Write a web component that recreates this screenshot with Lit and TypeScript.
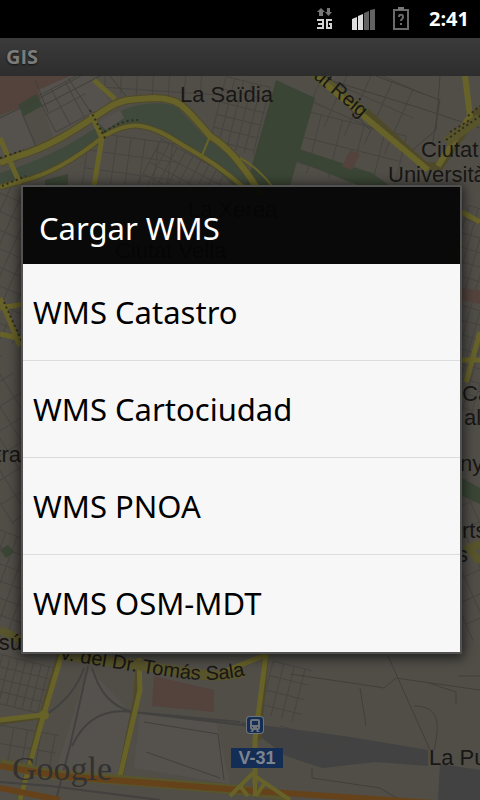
import { LitElement, html, css, svg } from "lit";
import { customElement, property } from "lit/decorators.js";

/** Parallel lines through a rotated box, used for the small street grids. */
function grid(cx: number, cy: number, w: number, h: number, step: number, angle: number) {
  let d = "";
  for (let x = -w / 2; x <= w / 2; x += step) d += `M${x} ${-h / 2}V${h / 2}`;
  for (let y = -h / 2; y <= h / 2; y += step + 4) d += `M${-w / 2} ${y}H${w / 2}`;
  return svg`<path class="street" d=${d} transform="translate(${cx} ${cy}) rotate(${angle})" />`;
}

@customElement("city-map")
class CityMap extends LitElement {
  static styles = css`
    :host { display: block; overflow: hidden; background: #514e48; }
    svg { display: block; width: 100%; height: 100%; }
    path { fill: none; }
    .street { stroke: #474440; stroke-width: 1; }
    .minor { stroke: #413f3b; stroke-width: 1; }
    .rail { stroke: #424140; stroke-width: 2; }
    .edge { stroke: #4e4928; }
    .road { stroke: #676228; }
    .halo { stroke: #58542c; }
    .dots { stroke: #2f2c18; stroke-dasharray: 2 3; stroke-width: 2; }
    .park { fill: #3a4535; }
    .water { fill: #3f4a3c; }
    .pink { fill: #54433d; }
    .block { fill: #55524d; }
    .depot { fill: #424243; }
    .orange { stroke: #66421a; }
    .w2 { stroke-width: 2; }
    .w4 { stroke-width: 4; }
    .w5 { stroke-width: 5; }
    .w6 { stroke-width: 6; }
    .w8 { stroke-width: 8; }
    .w10 { stroke-width: 10; }
    .hub { fill: #676228; }
    .label { font: 22px "Liberation Sans", Arial, sans-serif; fill: #181715; }
    .small { font-size: 20px; }
    .google { font: 34px "Liberation Serif", "Times New Roman", serif; fill: #32312f; }
    .sign { fill: #142d55; }
    .sign-text { font: bold 18px "Liberation Sans", Arial, sans-serif; fill: #7c8490; }
    .light { fill: #6e747c; }
  `;

  render() {
    const main =
      "M0 163L18 156C50 147 78 128 108 108C122 99 132 99 154 98C180 98 184 106 210 136C226 146 240 160 262 196";
    const south = "M0 187L22 181C52 174 82 154 104 136C128 122 142 122 168 136C196 154 216 162 244 188";
    return html`
      <svg viewBox="0 76 480 724" preserveAspectRatio="xMidYMid slice" role="img" aria-label="Valencia">
        <path class="pink" d="M0 76H70L32 103L0 115Z" />
        <path class="block" d="M0 118L20 110L34 145L0 158ZM38 90L70 76H92L110 102L55 145Z" />
        ${grid(66, 104, 44, 40, 16, -28)}
        ${grid(130, 168, 90, 60, 14, 8)}
        ${grid(185, 180, 80, 50, 9, 28)}
        ${grid(160, 84, 110, 26, 16, 4)}
        ${grid(240, 116, 46, 70, 9, 14)}
        ${grid(364, 106, 100, 70, 22, 24)}
        ${grid(346, 152, 110, 60, 22, 14)}
        ${grid(8, 260, 80, 150, 13, 24)}
        ${grid(8, 440, 80, 150, 17, -32)}
        ${grid(4, 590, 60, 110, 12, 20)}
        ${grid(470, 310, 60, 200, 10, 16)}
        ${grid(470, 560, 60, 150, 18, -24)}
        ${grid(20, 684, 64, 48, 8, 14)}
        ${grid(26, 750, 60, 40, 14, 10)}
        ${grid(286, 692, 40, 54, 11, 14)}

        <path class="water" d="M0 173C50 158 86 136 112 116C134 102 164 100 178 108L208 140C228 152 248 172 260 196H244C212 164 192 148 168 136C142 122 128 122 104 136C78 154 50 174 0 184Z" />
        <path class="block" d="M98 122L120 110L124 118L106 130Z" />
        <path class="park" d="M18 105L36 94L42 106L24 116ZM45 180L68 174V186H45ZM276 80L315 98L290 186H246Z" />
        <path class="park" d="M296 148L372 173L390 186H360L294 160Z" />
        <path class="pink" d="M350 150L360 154L352 170L342 166ZM462 288L480 290V304L462 300Z" />
        <path class="minor" d="M0 118L36 100L88 72M35 80L48 112M42 106L100 76M22 113L36 146M68 78L92 114M110 76L126 96M316 76L420 108L480 128M440 76L436 130L408 154M326 84L370 130M376 76L440 100L432 146" />

        <path class="edge w8" d=${main} />
        <path class="edge w6" d=${south} />
        <path class="road w6" d=${main} />
        <path class="road w4" d=${south} />
        <path class="road w5" d="M94 80L115 99M91 114L102 138L94 186M0 138L20 184" />
        <path class="road w2" d="M210 136L201 158" />
        <path class="dots" d="M0 158L24 150M2 186L26 176M90 110L106 140M104 132C120 122 128 120 138 120" />
        <path class="road w2" d="M240 158Q256 166 272 186" />
        <path class="halo w10" d="M308 68L368 116" />
        <path class="edge w8" d="M366 112L425 166H440L480 108" />
        <path class="road w6" d="M316 76L428 170M465 76L470 116L438 166" />
        <path class="halo w10" d="M480 118L446 142" />
        <path class="dots" d="M446 140L480 116M450 132L470 120M468 116L480 106" />

        <path class="road w5" d="M0 298L20 346M0 308L24 304M0 334L22 339" />
        <path class="dots" d="M4 302L22 342" />
        <path class="road w5" d="M462 212L480 222M480 332L466 382M462 360H480" />
        <path class="park" d="M0 550L8 545L14 552L6 558ZM462 478L480 488V504L462 496Z" />
        <path class="halo w8" d="M0 630L22 640M466 545L480 562M470 548L480 544" />

        <path class="block" d="M90 670L130 712L120 786L56 770L84 680ZM140 712L216 722L230 784L134 768Z" />
        <path class="pink" d="M154 676L214 690V712L152 706Z" />
        <path class="rail" d="M84 668C76 692 60 706 44 716M92 668C100 694 112 706 132 712L240 722M72 746C84 720 104 708 132 712M88 666L70 746L56 800M132 712L250 726" />
        <path class="minor" d="M144 722L218 734L224 780M146 752L220 778M290 674L358 684L384 688L396 678L480 690M388 656L414 714L430 750M360 688L366 726M414 706C440 706 440 724 434 750M312 768V778L380 788L400 800M458 676H480M426 682L456 692V704" />
        <path class="depot" d="M240 722L344 736L428 750V766L376 762L322 768L286 756Z" />
        <path class="depot" d="M440 764L480 770V800H438Z" />
        <path class="street" d="M280 726L350 744M286 736L336 750M300 744L328 752" />
        <path class="edge w6" d="M60 654L42 716L20 800M0 722L42 716M139 658L136 700L120 778M266 654L258 740" />
        <path class="road w5" d="M62 654L44 714L30 764L20 800M0 720L42 715M139 658L140 690L134 716L120 776M266 654L255 740V784M218 674L268 654" />
        <circle class="hub" cx="44" cy="715" r="5" />
        <path class="halo w10" d="M62 655C100 660 160 668 198 674Q222 678 244 672" />
        <path class="halo w10" d="M0 764L50 774L120 780L240 790L290 796" />
        <path class="orange w6" d="M0 766L60 776L240 790L480 806" />
        <path class="orange w6" d="M0 788L60 800" />
        <path class="road w4" d="M230 796L252 774L290 800M240 786L248 796M264 784L256 796M255 780V796" />
        <path class="rail" d="M0 782L50 786L160 800" />

        <defs>
          <path id="reig" d="M311 76L380 134" />
          <path id="tomas" d="M60 659Q150 675 188 679Q224 682 250 674" />
        </defs>
        <text class="label" x="180" y="102">La Saïdia</text>
        <text class="label small"><textPath href="#reig" startOffset="2">ut Reig</textPath></text>
        <text class="label" x="421" y="157">Ciutat</text>
        <text class="label" x="388" y="182">Universitària</text>
        <text class="label" x="188" y="217">La Xerea</text>
        <text class="label" x="115" y="258">Ciutat Vella</text>
        <text class="label" x="462" y="401">Ca</text>
        <text class="label" x="464" y="425">al</text>
        <text class="label" x="460" y="471">ny</text>
        <text class="label" x="462" y="538">rts</text>
        <text class="label" x="457" y="562">s</text>
        <text class="label" x="21" y="462" text-anchor="end">Extra</text>
        <text class="label" x="22" y="650" text-anchor="end">Jesú</text>
        <text class="label small"><textPath href="#tomas">v. del Dr. Tomás Sala</textPath></text>
        <text class="label" x="429" y="765">La Punta</text>

        <rect class="light" x="246" y="716" width="18" height="18" rx="4" />
        <rect class="sign" x="247" y="717" width="16" height="16" rx="3" />
        <path class="light" fill-rule="evenodd" d="M252 719H258Q260 719 260 721V728Q260 730 258 730L260 732H257L256 730H254L253 732H250L252 730Q250 730 250 728V721Q250 719 252 719ZM252 721V725H258V721ZM252 727V728H253V727ZM257 727V728H258V727Z" />
        <rect class="sign" x="231" y="748" width="52" height="20" />
        <text class="sign-text" x="257" y="764" text-anchor="middle">V-31</text>
        <text class="google" x="12" y="780">Google</text>
      </svg>
    `;
  }
}

@customElement("status-bar")
class StatusBar extends LitElement {
  static styles = css`
    :host {
      display: flex; align-items: center; justify-content: flex-end;
      height: 38px; padding-right: 11px; background: #000; color: #fff;
      font: bold 20px/38px "Open Sans", "Noto Sans", sans-serif;
    }
    svg { width: 96px; height: 38px; margin-right: 18px; }
    .g3 { fill: none; stroke: #d2d2d2; stroke-width: 2; }
    .dim { fill: #777; }
    .on { fill: #ddd; }
    .off { fill: #626262; }
    .cell { fill: none; stroke: #6a6a6a; stroke-width: 2; }
  `;

  render() {
    return html`
      <svg viewBox="315 0 96 38" aria-hidden="true">
        <path class="dim" d="M321 8L325 12H323V16H319V12H317ZM327 8H330V12H332L328.500 16L325 12H327Z" />
        <path class="g3" d="M317 20H323V28H317M318 24H323M332 20H327V28H331V24H329" />
        <path class="on" d="M352 19L357 17V30H352ZM358 16L363 14V30H358Z" />
        <path class="off" d="M364 13L369 11V30H364ZM370 10L375 9V30H370Z" />
        <path class="cell" d="M394 10H408V29H394Z" />
        <path class="dim" d="M398 7H404V10H398Z" />
        <path class="cell" d="M399 17C399 14 403 14 403 17C403 19 401 19 401 21M401 23V25" />
      </svg>
      <time>2:41</time>
    `;
  }
}

@customElement("choice-dialog")
class ChoiceDialog extends LitElement {
  @property() heading = "";
  @property({ attribute: false }) choices: string[] = [];

  static styles = css`
    :host {
      display: block; border: 2px solid #525252; border-radius: 2px;
      box-shadow: 0 2px 12px 2px rgba(0, 0, 0, 0.6);
      font: 31px/40px "Noto Sans", "Open Sans", sans-serif;
    }
    h2 {
      margin: 0; padding: 21px 16px 16px; font: inherit;
      background: rgba(4, 4, 4, 0.93); color: #fff;
    }
    ul { margin: 0; padding: 0 0 1px; list-style: none; background: #f7f7f7; }
    li + li { border-top: 1px solid #dcdcdc; }
    button {
      display: block; width: 100%; height: 96px; padding: 0 10px;
      border: 0; background: none; color: #000; font: inherit; text-align: left;
    }
  `;

  render() {
    return html`
      <h2>${this.heading}</h2>
      <ul>${this.choices.map((c) => html`<li><button type="button">${c}</button></li>`)}</ul>
    `;
  }
}

@customElement("app-root")
class AppRoot extends LitElement {
  static styles = css`
    :host { display: flex; flex-direction: column; min-height: 100vh; background: #000; }
    main { flex: 1; display: grid; grid-template: minmax(0, 1fr) / minmax(0, 1fr); }
    .activity, .overlay { grid-area: 1 / 1; }
    .activity { display: flex; flex-direction: column; min-height: 0; }
    h1 {
      margin: 0; padding: 0 6px; color: #7c7c7c;
      font: bold 20px/38px "Open Sans", "Noto Sans", sans-serif;
      background: linear-gradient(#3b3b3b, #2d2d2d);
      text-shadow: 0 1px 2px #111;
    }
    city-map { flex: 1 1 0; min-height: 0; }
    .overlay { position: relative; display: grid; align-items: center; padding: 1px 18px 0 21px; }
  `;

  render() {
    return html`
      <status-bar></status-bar>
      <main>
        <div class="activity">
          <h1>GIS</h1>
          <city-map></city-map>
        </div>
        <div class="overlay">
          <choice-dialog
            role="dialog"
            aria-label="Cargar WMS"
            heading="Cargar WMS"
            .choices=${["WMS Catastro", "WMS Cartociudad", "WMS PNOA", "WMS OSM-MDT"]}
          ></choice-dialog>
        </div>
      </main>
    `;
  }
}
